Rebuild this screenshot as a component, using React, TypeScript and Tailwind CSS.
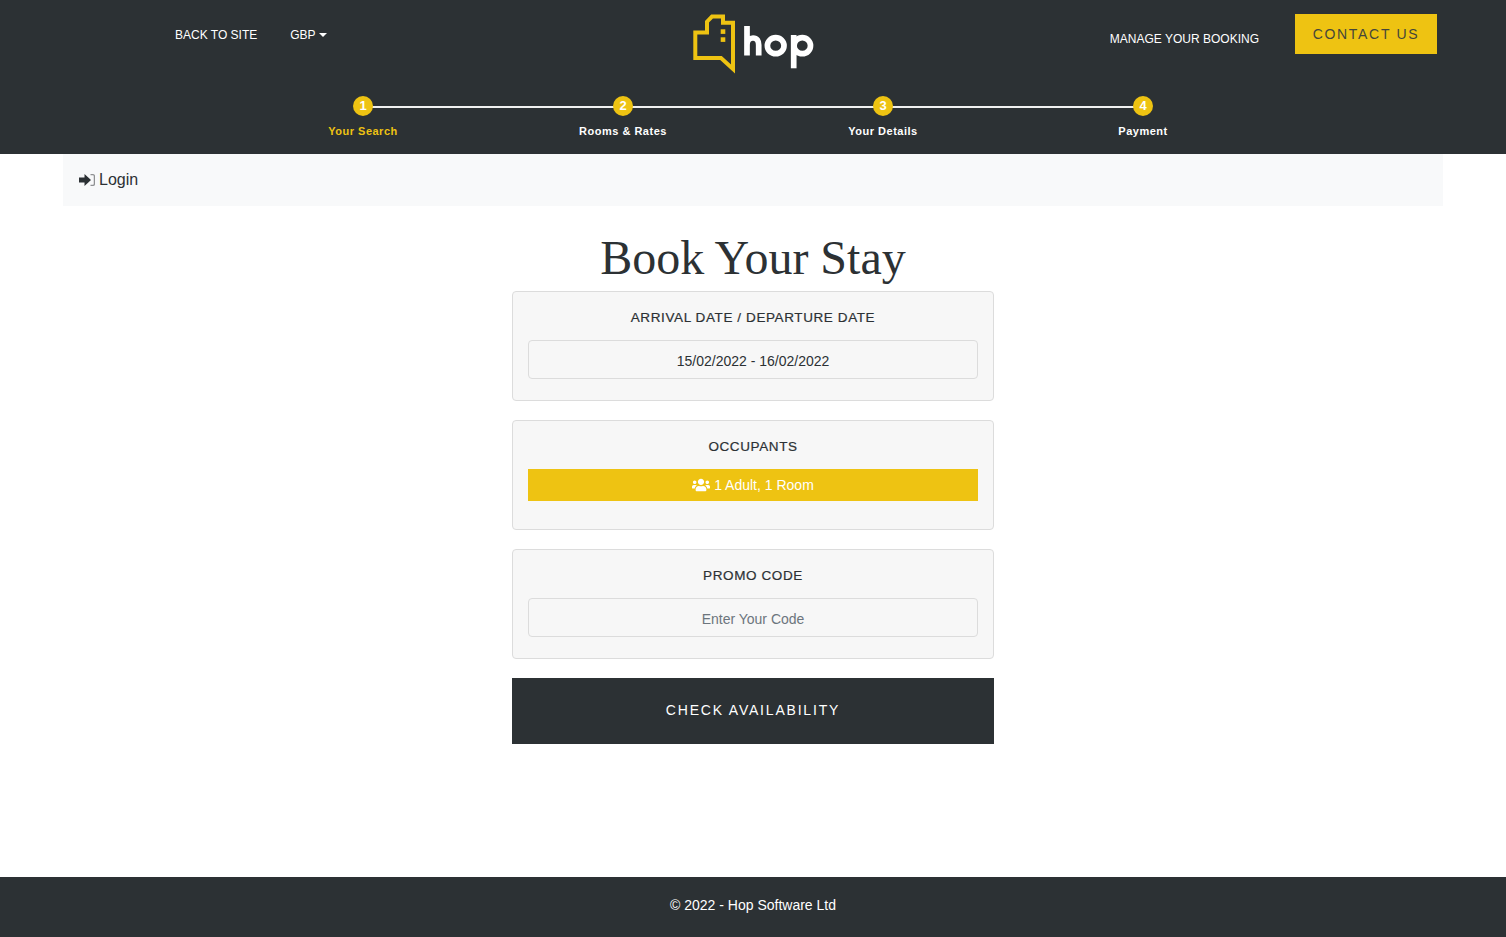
import { FaUsers } from 'react-icons/fa'

const steps = ['Your Search', 'Rooms & Rates', 'Your Details', 'Payment']

function Logo() {
  return (
    <svg width="122" height="62" viewBox="0 0 122 62" fill="none">
      <path d="M3.300 19.500H15V8.700L20 3.500H31V9.700H41V56L29 45H3.300Z" stroke="#eec312" strokeWidth="4" />
      <rect x="28.700" y="16.300" width="4.600" height="4.600" fill="#eec312" />
      <rect x="28.700" y="24.300" width="4.600" height="4.600" fill="#eec312" />
      <path
        d="M55 13V42.500M55 32C55 27.500 58 25 61 25C65 25 66.700 28 66.700 32V42.500"
        stroke="#fff"
        strokeWidth="5.700"
      />
      <ellipse cx="83.700" cy="32.700" rx="8.300" ry="8" stroke="#fff" strokeWidth="5.700" />
      <path d="M101.700 22V55.300" stroke="#fff" strokeWidth="5.700" />
      <ellipse cx="110.300" cy="32.700" rx="8.200" ry="8" stroke="#fff" strokeWidth="5.700" />
    </svg>
  )
}

function LoginIcon() {
  return (
    <svg width="16" height="12" viewBox="0 0 16 12" className="shrink-0">
      <path d="M0 3.500H5.500V0L12 6L5.500 12V8.500H0Z" fill="#2c3134" />
      <path d="M11.500 0.700H14C14.900 0.700 15.400 1.300 15.400 2.200V9.800C15.400 10.700 14.900 11.300 14 11.300H11.500" stroke="#8f9193" strokeWidth="1.300" fill="none" />
    </svg>
  )
}

function Card({ title, children }: { title: string; children: React.ReactNode }) {
  return (
    <section className="h-[110px] rounded-[4px] border border-[#dcdcdc] bg-[#f7f7f7] px-[15px] pt-[16px]">
      <h2 className="mb-[13px] text-center text-[13.500px] leading-[19px] font-medium tracking-[0.6px] text-[#2c3134] [-webkit-text-stroke:0.2px_#2c3134]">
        {title}
      </h2>
      {children}
    </section>
  )
}

export default function App() {
  return (
    <div className="flex min-h-[937px] flex-col bg-white font-['Liberation_Sans',Arial,sans-serif] text-[#2c3134]">
      <header className="h-[154px] bg-[#2c3134] text-white">
        <div className="grid h-[96px] grid-cols-[1fr_auto_1fr]">
          <nav className="flex items-start gap-[33px] pt-[27px] pl-[175px] text-[12px] leading-[17px]">
            <a>BACK TO SITE</a>
            <a className="flex items-center gap-[3px]">
              GBP
              <span className="mb-[2px] border-x-[4px] border-t-[4px] border-x-transparent border-t-white" />
            </a>
          </nav>
          <div className="pt-[13px]">
            <Logo />
          </div>
          <div className="flex items-start justify-end pt-[14px] pr-[69px]">
            <a className="mt-[17px] mr-[36px] text-[12px] leading-[17px]">MANAGE YOUR BOOKING</a>
            <a className="flex h-[40px] w-[142px] items-center justify-center bg-[#eec312] text-[14px] tracking-[1.7px] text-[#45463a]">
              CONTACT US
            </a>
          </div>
        </div>
        <ol className="mx-auto grid w-[1040px] grid-cols-4">
          {steps.map((step, i) => (
            <li key={step} className="relative flex flex-col items-center">
              {i < steps.length - 1 && (
                <span className="absolute top-[10px] left-1/2 h-[2px] w-full bg-[#f0f0f0]" />
              )}
              <span className="relative flex h-[20px] w-[20px] items-center justify-center rounded-full bg-[#eec312] text-[13px] font-bold text-white">
                {i + 1}
              </span>
              <span
                className={`mt-[8px] text-[11px] leading-[14px] font-bold tracking-[0.5px] ${
                  i === 0 ? 'text-[#eec312]' : 'text-white'
                }`}
              >
                {step}
              </span>
            </li>
          ))}
        </ol>
      </header>

      <main className="flex-1">
        <div className="mx-[63px] flex h-[52px] items-center gap-[4px] bg-[#f8f9fa] px-[16px] text-[16px]">
          <LoginIcon />
          <span>Login</span>
        </div>
        <h1 className="mt-[23px] text-center font-['Liberation_Serif',serif] text-[48px] leading-[58px]">
          Book Your Stay
        </h1>
        <div className="mx-auto mt-[4px] flex w-[482px] flex-col gap-[19px]">
          <Card title="ARRIVAL DATE / DEPARTURE DATE">
            <div className="flex h-[39px] items-center justify-center rounded-[4px] border border-[#dcdcdc] pt-[3px] text-[14px]">
              15/02/2022 - 16/02/2022
            </div>
          </Card>
          <Card title="OCCUPANTS">
            <button className="flex h-[32px] w-full items-center justify-center gap-[4px] bg-[#eec312] text-[14px] text-white">
              <FaUsers className="text-[18px]" />
              1 Adult, 1 Room
            </button>
          </Card>
          <Card title="PROMO CODE">
            <div className="flex h-[39px] items-center justify-center rounded-[4px] border border-[#dcdcdc] pt-[3px] text-[14px] text-[#6c757d]">
              Enter Your Code
            </div>
          </Card>
          <button className="h-[66px] bg-[#2c3134] pb-[2px] text-[14px] tracking-[1.8px] text-white">
            CHECK AVAILABILITY
          </button>
        </div>
      </main>

      <footer className="flex h-[60px] items-center justify-center bg-[#2c3134] pb-[4px] text-[14px] text-white">
        © 2022 - Hop Software Ltd
      </footer>
    </div>
  )
}
